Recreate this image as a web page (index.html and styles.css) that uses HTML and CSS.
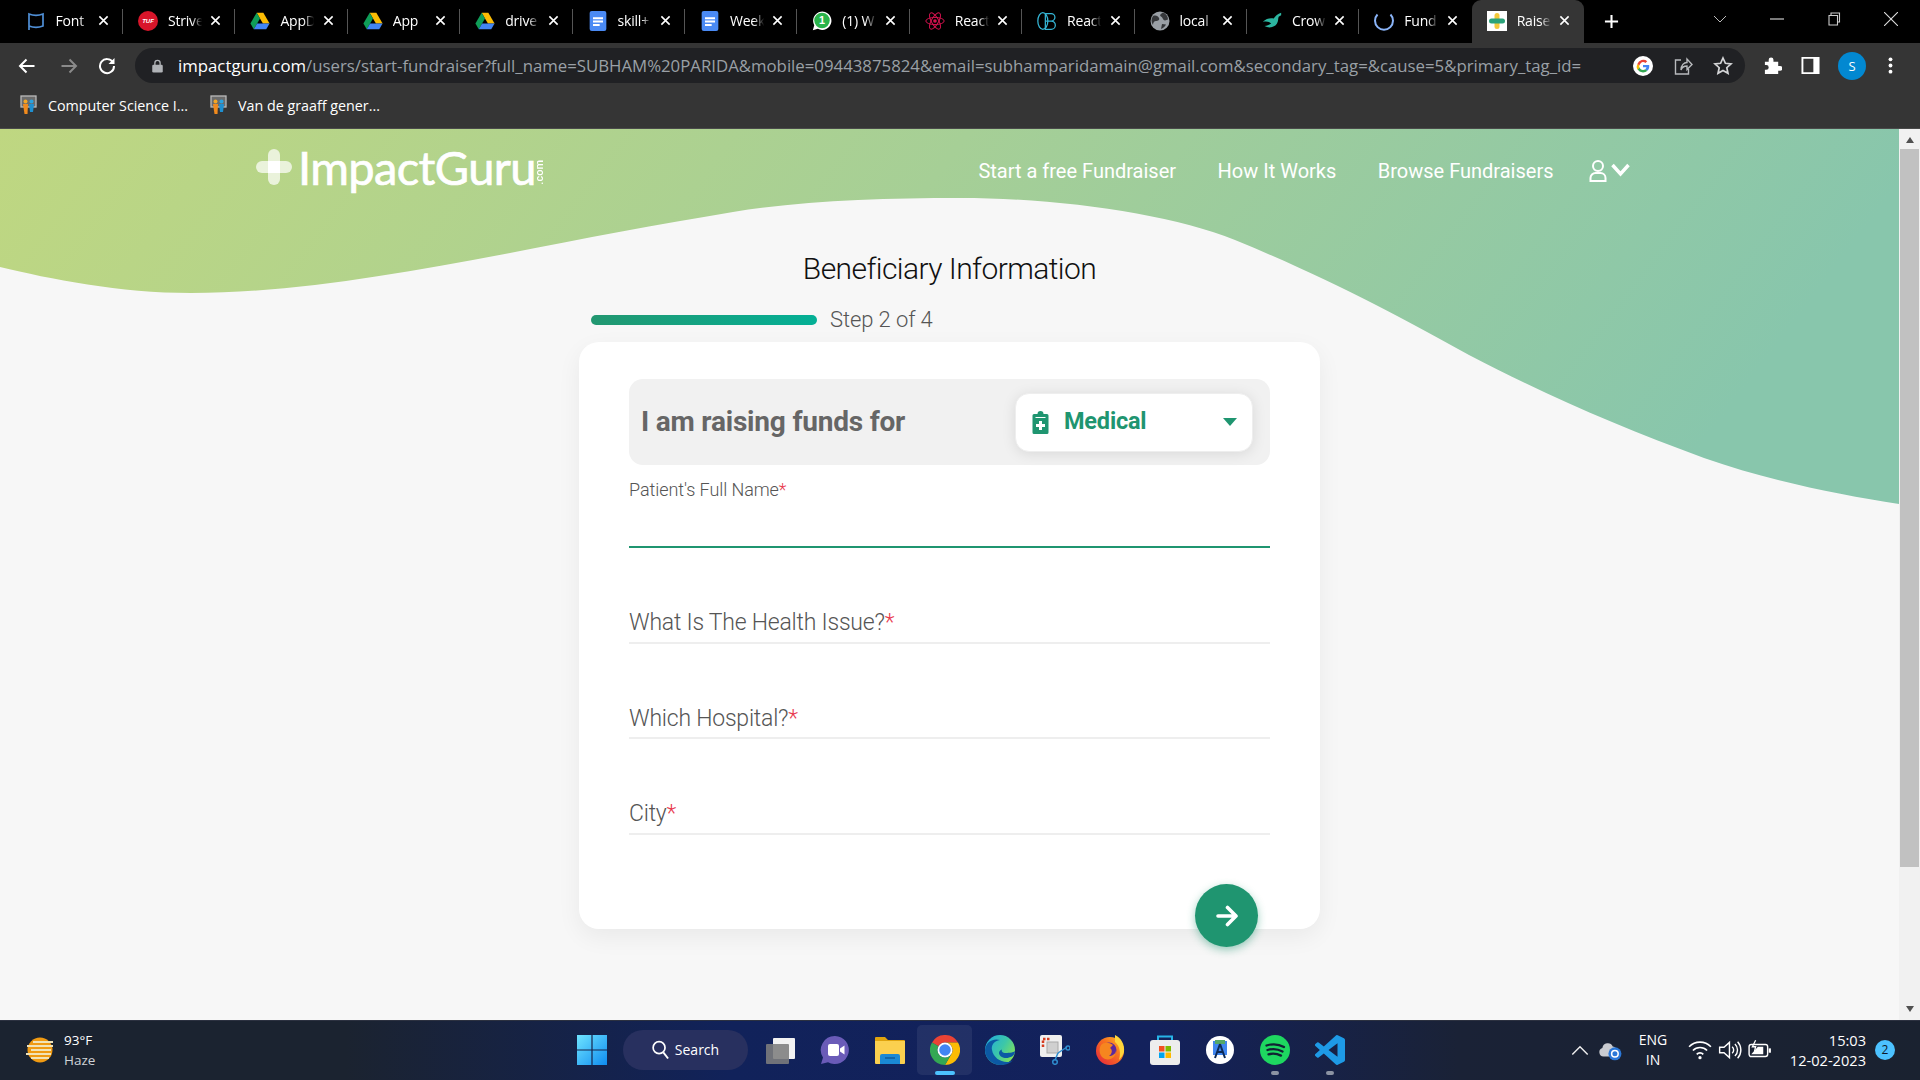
FILE: index.html
```html
<!DOCTYPE html>
<html lang="en">
<head>
<meta charset="utf-8">
<title>Raise Funds - ImpactGuru</title>
<link rel="stylesheet" href="styles.css">
</head>
<body>
<svg class="defs" aria-hidden="true">
  <symbol id="x" viewBox="0 0 12 12"><path d="M1.500 1.500l9 9M10.500 1.500l-9 9" stroke="#fff" stroke-width="1.700" fill="none"/></symbol>
  <symbol id="drive" viewBox="0 0 24 24"><path d="M8 2h8l7.500 13h-8z" fill="#fbbc04"/><path d="M8 2L.5 15l4 7L12 9z" fill="#0f9d58"/><path d="M4.500 22h15l4-7H8.500z" fill="#4285f4"/></symbol>
  <symbol id="docs" viewBox="0 0 20 24"><rect width="20" height="24" rx="2.500" fill="#4a8af4"/><path d="M4 7.500h12v2.400H4zM4 11.500h12v2.400H4zM4 15.500h8v2.400H4z" fill="#fff"/></symbol>
  <symbol id="bm" viewBox="0 0 17 20"><rect x="1" y="1" width="15" height="11" fill="#6b6b6b" stroke="#bbb" stroke-width="1.300"/><circle cx="5.500" cy="6.500" r="2" fill="#f5a623"/><circle cx="11.500" cy="6.500" r="2" fill="#29a3e0"/><path d="M3 9h5l-.5 10h-3z" fill="#f08a1d"/><path d="M9 9h5l-1 8h-3z" fill="#1f8fd0"/></symbol>
</svg>

<header class="tabstrip">
  <div class="tab"><svg class="fav" viewBox="0 0 20 20"><path d="M3 19V3c5 2 9 2 14 0v12c-5 2-9 2-14 0" fill="none" stroke="#4f8fd6" stroke-width="1.700"/></svg><span class="tab-name">Font</span><svg class="close"><use href="#x"/></svg></div>
  <div class="tab"><svg class="fav" viewBox="0 0 20 20"><circle cx="10" cy="10" r="10" fill="#d8152a"/><text x="10" y="12.300" class="tuf">TUF</text></svg><span class="tab-name">Strive</span><svg class="close"><use href="#x"/></svg></div>
  <div class="tab"><svg class="fav"><use href="#drive"/></svg><span class="tab-name">AppD</span><svg class="close"><use href="#x"/></svg></div>
  <div class="tab"><svg class="fav"><use href="#drive"/></svg><span class="tab-name">App</span><svg class="close"><use href="#x"/></svg></div>
  <div class="tab"><svg class="fav"><use href="#drive"/></svg><span class="tab-name">drive</span><svg class="close"><use href="#x"/></svg></div>
  <div class="tab"><svg class="fav"><use href="#docs"/></svg><span class="tab-name">skill+</span><svg class="close"><use href="#x"/></svg></div>
  <div class="tab"><svg class="fav"><use href="#docs"/></svg><span class="tab-name">Week</span><svg class="close"><use href="#x"/></svg></div>
  <div class="tab"><svg class="fav" viewBox="0 0 24 24"><path d="M1 23l1.700-6A11 11 0 1 1 7 21.300z" fill="#fff"/><circle cx="12" cy="11.500" r="9.300" fill="#29b34a"/><text x="12" y="16" class="wa">1</text></svg><span class="tab-name">(1) W</span><svg class="close"><use href="#x"/></svg></div>
  <div class="tab"><svg class="fav" viewBox="0 0 24 24"><g fill="none" stroke="#d3124e" stroke-width="1.200"><ellipse cx="12" cy="12" rx="11" ry="4.300"/><ellipse cx="12" cy="12" rx="11" ry="4.300" transform="rotate(60 12 12)"/><ellipse cx="12" cy="12" rx="11" ry="4.300" transform="rotate(120 12 12)"/></g><circle cx="12" cy="12" r="2.200" fill="#d3124e"/></svg><span class="tab-name">React</span><svg class="close"><use href="#x"/></svg></div>
  <div class="tab"><svg class="fav" viewBox="0 0 24 24"><g fill="none" stroke="#35b6d6" stroke-width="1.500"><ellipse cx="7" cy="12" rx="6" ry="10"/><path d="M10 3h7a4.500 4.500 0 0 1 0 9h-7M17 12a5 5 0 0 1 0 10h-7V3"/></g></svg><span class="tab-name">React</span><svg class="close"><use href="#x"/></svg></div>
  <div class="tab"><svg class="fav" viewBox="0 0 20 20"><circle cx="10" cy="10" r="9.500" fill="#9aa0a6"/><path d="M3 5c3-1 5 0 6 2s-1 3-3 3-3 2-3 4c-2-3-2-6 0-9zM13 1.500c3 1 5 4 5 7l-3 1c-2 0-2-3-4-4s0-3 2-4zM12 13l4 .500c-1 2-3 4-5 4.500z" fill="#35373a"/></svg><span class="tab-name">local</span><svg class="close"><use href="#x"/></svg></div>
  <div class="tab"><svg class="fav" viewBox="0 0 24 24"><path d="M23 2C19 3 16 6 14 9 10 8 5 9 1 13c5-1 8 0 10 2-3 2-5 3-8 3 5 3 12 2 15-3 2-3 1-6 2-8l3-2z" fill="#2cb5a0"/></svg><span class="tab-name">Crow</span><svg class="close"><use href="#x"/></svg></div>
  <div class="tab"><svg class="fav" viewBox="0 0 20 20"><path d="M3.500 3.500a9 9 0 1 0 13 0" fill="none" stroke="#8ab4f8" stroke-width="2"/></svg><span class="tab-name">Fund</span><svg class="close"><use href="#x"/></svg></div>
  <div class="tab tab-active"><svg class="fav" viewBox="0 0 20 20"><rect width="20" height="20" fill="#fff"/><rect x="7.500" y="2" width="5" height="16" rx="2.500" fill="#f3c93a"/><rect x="2" y="7.500" width="16" height="5" rx="2.500" fill="#2ba37a"/></svg><span class="tab-name">Raise</span><svg class="close"><use href="#x"/></svg></div>
  <svg class="newtab" viewBox="0 0 16 16"><path d="M8 1v14M1 8h14" stroke="#fff" stroke-width="2.200"/></svg>
  <div class="winctl">
    <svg class="win-i" viewBox="0 0 14 14"><path d="M1 4l6 6 6-6" fill="none" stroke="#bbb" stroke-width="1"/></svg>
    <svg class="win-i" viewBox="0 0 14 14"><path d="M0 7h14" stroke="#ccc" stroke-width="1.200"/></svg>
    <svg class="win-i" viewBox="0 0 14 14"><path d="M2 3.500h8.500v9.500H2zM4 3.500V1h8.500v9h-2" fill="none" stroke="#ccc" stroke-width="1.100"/></svg>
    <svg class="win-i" viewBox="0 0 14 14"><path d="M0 0l14 14M14 0L0 14" stroke="#ddd" stroke-width="1.100"/></svg>
  </div>
</header>

<div class="toolbar">
  <svg class="tb-i" viewBox="0 0 18 18"><path d="M16.500 9H2M8.500 2.500L2 9l6.500 6.500" fill="none" stroke="#fff" stroke-width="2"/></svg>
  <svg class="tb-i" viewBox="0 0 18 18"><path d="M1.500 9H16M9.500 2.500L16 9l-6.500 6.500" fill="none" stroke="#8a8a8a" stroke-width="2"/></svg>
  <svg class="tb-i" viewBox="0 0 18 18"><path d="M15 5.500A7 7 0 1 0 16 9" fill="none" stroke="#fff" stroke-width="2"/><path d="M16.500 1v6h-6z" fill="#fff"/></svg>
  <div class="omnibox">
    <svg class="lock" viewBox="0 0 12 16"><path d="M3 7V4.500a3 3 0 0 1 6 0V7" fill="none" stroke="#b0b3b7" stroke-width="1.500"/><rect y="6.500" width="12" height="9" rx="1.500" fill="#b0b3b7"/></svg>
    <div class="url"><span class="url-host">impactguru.com</span>/users/start-fundraiser?full_name=SUBHAM%20PARIDA&amp;mobile=09443875824&amp;email=subhamparidamain@gmail.com&amp;secondary_tag=&amp;cause=5&amp;primary_tag_id=</div>
    <svg class="omni-i" viewBox="0 0 24 24"><circle cx="12" cy="12" r="12" fill="#fff"/><path d="M19.500 12.200c0-.6 0-1-.1-1.500H12v2.900h4.200a3.600 3.600 0 0 1-1.500 2.300l2.400 1.900c1.500-1.300 2.400-3.300 2.400-5.600z" fill="#4285f4"/><path d="M12 19.700c2.100 0 3.800-.7 5.100-1.900l-2.400-1.900c-.7.500-1.600.8-2.700.8-2 0-3.700-1.400-4.300-3.200l-2.500 1.900a7.700 7.700 0 0 0 6.800 4.300z" fill="#34a853"/><path d="M7.700 14.500a4.600 4.600 0 0 1 0-3L5.200 9.600a7.700 7.700 0 0 0 0 6.800z" fill="#fbbc05"/><path d="M12 7.300c1.100 0 2.100.4 2.900 1.100l2.200-2.200A7.700 7.700 0 0 0 5.200 9.600l2.500 1.900c.6-1.800 2.300-4.200 4.300-4.200z" fill="#ea4335"/></svg>
    <svg class="omni-i" viewBox="0 0 20 20"><path d="M8 4H2.500v14h13v-5M8 14c0-5 3-7.500 6-7.500V3l5 5.500-5 5V10c-3 0-5 1-6 4z" fill="none" stroke="#b8babd" stroke-width="1.400"/></svg>
    <svg class="omni-i" viewBox="0 0 20 20"><path d="M10 2l2.400 5.300 5.600.6-4.200 3.800 1.200 5.600-5-2.900-5 2.900 1.200-5.600L2 7.900l5.600-.6z" fill="none" stroke="#d4d5d7" stroke-width="1.700"/></svg>
  </div>
  <svg class="ext-i" viewBox="0 0 20 20"><path d="M2 6h4V4a2.500 2.500 0 0 1 5 0v2h5v4.500h2a2.500 2.500 0 0 1 0 5h-2V19H2v-4.500h1.500a2.500 2.500 0 0 0 0-5H2z" fill="#fff"/></svg>
  <svg class="ext-i" viewBox="0 0 20 20"><path d="M1.500 2h17v16h-17z" fill="none" stroke="#fff" stroke-width="2"/><path d="M13 2h5.500v16H13z" fill="#fff"/></svg>
  <div class="avatar">S</div>
  <svg class="ext-i" viewBox="0 0 20 20"><circle cx="10" cy="3.500" r="2" fill="#fff"/><circle cx="10" cy="10" r="2" fill="#fff"/><circle cx="10" cy="16.500" r="2" fill="#fff"/></svg>
</div>

<nav class="bookmarks">
  <a class="bm"><svg class="bm-i"><use href="#bm"/></svg>Computer Science I...</a>
  <a class="bm"><svg class="bm-i"><use href="#bm"/></svg>Van de graaff gener...</a>
</nav>

<div class="page-row">
  <main class="viewport">
    <svg class="wave" viewBox="0 0 1899 376" preserveAspectRatio="none" aria-hidden="true">
      <defs><linearGradient id="wg" x1="0" y1="0" x2="1" y2="0.150"><stop offset="0" stop-color="#bfd781"/><stop offset="0.500" stop-color="#a6cf96"/><stop offset="1" stop-color="#88c6ac"/></linearGradient></defs>
      <path d="M0 0H1899V375C1840 366 1770 352 1704 329C1620 298 1550 268 1469 226C1400 188 1330 150 1235 111C1170 85 1060 69 960 69C880 69 800 72 733 83C660 95 580 110 510 124C400 145 290 164 191 164C120 164 50 150 0 138Z" fill="url(#wg)"/>
    </svg>
    <div class="site-nav">
      <a class="logo">
        <svg class="logo-plus" viewBox="0 0 36 36"><rect x="12" width="12" height="36" rx="6" fill="#fff" fill-opacity=".7"/><rect y="12" width="36" height="12" rx="6" fill="#fff" fill-opacity=".7"/><rect x="12" y="12" width="12" height="12" fill="#fff"/></svg>
        <span class="logo-word">ImpactGuru</span><span class="logo-com">.com</span>
      </a>
      <div class="nav-links">
        <a class="nav-link">Start a free Fundraiser</a>
        <a class="nav-link">How It Works</a>
        <a class="nav-link">Browse Fundraisers</a>
        <svg class="nav-user" viewBox="0 0 42 24"><circle cx="9" cy="7" r="5" fill="none" stroke="#fff" stroke-width="2"/><path d="M1.500 22v-3a5 5 0 0 1 5-5h5a5 5 0 0 1 5 5v3z" fill="none" stroke="#fff" stroke-width="2"/><path d="M23.500 6l8 9 8-9" fill="none" stroke="#fff" stroke-width="3.400"/></svg>
      </div>
    </div>
    <section class="wizard">
      <h1 class="title">Beneficiary Information</h1>
      <div class="step">
        <div class="progress"></div>
        <span class="step-text">Step 2 of 4</span>
      </div>
      <form class="card">
        <div class="cause">
          <span class="cause-label">I am raising funds for</span>
          <div class="select">
            <svg class="clip" viewBox="0 0 16 23"><path d="M1.500 3H5a3 3 0 0 1 6 0h3.500A1.500 1.500 0 0 1 16 4.500v17a1.500 1.500 0 0 1-1.500 1.500h-13A1.500 1.500 0 0 1 0 21.500v-17A1.500 1.500 0 0 1 1.500 3z" fill="#1f9570"/><path d="M6.500 10h3v3h3v3h-3v3h-3v-3h-3v-3h3z" fill="#fff"/><path d="M3 6.500h10" stroke="#fff" stroke-width="1"/></svg>
            <span class="select-text">Medical</span>
            <span class="caret"></span>
          </div>
        </div>
        <div class="field field-active">
          <span class="field-label">Patient's Full Name<i class="req">*</i></span>
        </div>
        <div class="field"><span class="placeholder">What Is The Health Issue?<i class="req">*</i></span></div>
        <div class="field"><span class="placeholder">Which Hospital?<i class="req">*</i></span></div>
        <div class="field"><span class="placeholder">City<i class="req">*</i></span></div>
        <div class="form-foot">
          <div class="next"><svg class="next-i" viewBox="0 0 22 22"><path d="M2 11h17M11.500 2.500L20 11l-8.500 8.500" fill="none" stroke="#fff" stroke-width="3.600" stroke-linecap="round" stroke-linejoin="round"/></svg></div>
        </div>
      </form>
    </section>
  </main>
  <aside class="scrollbar">
    <span class="sb-up"></span>
    <div class="sb-thumb"></div>
    <span class="sb-down"></span>
  </aside>
</div>

<footer class="taskbar">
  <div class="weather">
    <svg class="weather-i" viewBox="0 0 30 26"><circle cx="15" cy="13" r="12.500" fill="#f09a12"/><path d="M8 5h20M2 9h26M6 13h20M1 17h25M6 21h18" stroke="#f1e3b8" stroke-width="2"/></svg>
    <div class="weather-text"><span class="w-temp">93°F</span><span class="w-cond">Haze</span></div>
  </div>
  <div class="tb-app"><svg class="app-i" viewBox="0 0 30 30"><defs><linearGradient id="wn" x1="0" y1="0" x2="1" y2="1"><stop offset="0" stop-color="#6fe4ff"/><stop offset="1" stop-color="#0f8cf0"/></linearGradient></defs><path d="M0 0h14.400v14.400H0zM15.600 0H30v14.400H15.600zM0 15.600h14.400V30H0zM15.600 15.600H30V30H15.600z" fill="url(#wn)"/></svg></div>
  <div class="search"><svg class="search-i" viewBox="0 0 18 20"><circle cx="7.500" cy="7.500" r="6.300" fill="none" stroke="#fff" stroke-width="1.800"/><path d="M12 12.500l5 6.500" stroke="#fff" stroke-width="2"/></svg><span>Search</span></div>
  <div class="tb-app tb-first"><svg class="app-i" viewBox="0 0 30 30"><rect x="8" y="3" width="22" height="21" rx="1" fill="#f2f2f2"/><rect x="1" y="9" width="23" height="20" rx="1" fill="#7d7d7d" fill-opacity=".88"/></svg></div>
  <div class="tb-app"><svg class="app-i" viewBox="0 0 30 30"><path d="M15 1a14 14 0 1 1-7 26.200L1 29l2-6.500A14 14 0 0 1 15 1z" fill="#6a5bb8"/><rect x="8" y="9" width="11" height="12" rx="2" fill="#fff"/><path d="M20 13.500l4.500-3v9l-4.500-3z" fill="#fff"/></svg></div>
  <div class="tb-app"><svg class="app-i" viewBox="0 0 30 30"><path d="M0 3a1 1 0 0 1 1-1h9l3 3h16a1 1 0 0 1 1 1v5H0z" fill="#e0a40e"/><path d="M0 6h30v22a1 1 0 0 1-1 1H1a1 1 0 0 1-1-1z" fill="#fbd04f"/><path d="M5 29V21a2 2 0 0 1 2-2h16a2 2 0 0 1 2 2v8z" fill="#1a89d4"/><path d="M10 23h10" stroke="#0d5c9c" stroke-width="1.500"/></svg></div>
  <div class="tb-app tb-active"><svg class="app-i" viewBox="0 0 24 24"><path d="M1.600 6A12 12 0 0 1 22.400 6H12A6 6 0 0 0 6.800 9z" fill="#ea4335"/><path d="M22.400 6A12 12 0 0 1 12 24l5.200-9A6 6 0 0 0 12 6z" fill="#fbbc04"/><path d="M12 24A12 12 0 0 1 1.600 6l5.200 3a6 6 0 0 0 10.400 6z" fill="#34a853"/><circle cx="12" cy="12" r="6" fill="#fff"/><circle cx="12" cy="12" r="4.600" fill="#4285f4"/></svg><span class="run run-on"></span></div>
  <div class="tb-app"><svg class="app-i" viewBox="0 0 30 30"><defs><linearGradient id="ed" x1="0" y1="0" x2="1" y2=".6"><stop offset="0" stop-color="#1fa9e4"/><stop offset=".6" stop-color="#3cc7a8"/><stop offset="1" stop-color="#7ee05e"/></linearGradient></defs><circle cx="15" cy="15" r="15" fill="url(#ed)"/><path d="M0 15C1 6 9 3 15 5c-6 1-9 5-8 10 1 7 8 12 15 12 2 0 4-.5 6-2-3 4-8 5-13 5C7 30 0 23 0 15z" fill="#0c59a4"/><path d="M30 16c0 5-5 7-9 7-3 0-7-2-7-5 0-2 1.500-3 3-3.500-1 2 1 3.500 3.500 3.500 4 0 9.500-1 9.500-2z" fill="#0c59a4"/></svg></div>
  <div class="tb-app"><svg class="app-i" viewBox="0 0 30 30"><rect width="22" height="22" rx="2" fill="#efefef"/><path d="M3 12V4h8" fill="none" stroke="#d63c20" stroke-width="2.500" stroke-dasharray="2.500 1.500"/><rect x="7" y="7" width="11" height="11" fill="#d0d0d0" stroke="#aaa"/><path d="M18 18l9-6M18 18l-3 7" stroke="#2f8ed0" stroke-width="1.500"/><circle cx="28" cy="13" r="2" fill="none" stroke="#2f8ed0" stroke-width="1.500"/><circle cx="15" cy="27" r="2.300" fill="none" stroke="#2f8ed0" stroke-width="1.500"/></svg></div>
  <div class="tb-app"><svg class="app-i" viewBox="0 0 30 30"><defs><linearGradient id="ff" x1="0" y1="1" x2="1" y2="0"><stop offset="0" stop-color="#e5213f"/><stop offset=".6" stop-color="#f8751e"/><stop offset="1" stop-color="#ffc62f"/></linearGradient></defs><circle cx="15" cy="16" r="14" fill="url(#ff)"/><path d="M20 0c6 3 10 9 9 17-1 3-3 6-5 8 2-7 1-14-4-18z" fill="#ffd53a"/><circle cx="14" cy="15" r="7.500" fill="#5b2a9d"/><path d="M6 10c3-3 8-3 12 0l-3 3c3 2 2 6-1 8 3 0 7-2 7-6 1 6-5 11-11 9-5-2-7-9-4-14z" fill="#f6861f"/></svg></div>
  <div class="tb-app"><svg class="app-i" viewBox="0 0 30 30"><path d="M8 6V1.500h14V6" fill="none" stroke="#27b3e8" stroke-width="2"/><rect y="5" width="30" height="25" rx="3" fill="#ededed"/><path d="M9 11h5.500v5.500H9z" fill="#f25022"/><path d="M15.500 11H21v5.500h-5.500z" fill="#7fba00"/><path d="M9 17.500h5.500V23H9z" fill="#00a4ef"/><path d="M15.500 17.500H21V23h-5.500z" fill="#ffb900"/></svg></div>
  <div class="tb-app"><svg class="app-i" viewBox="0 0 30 30"><circle cx="15" cy="15" r="14" fill="#fff"/><path d="M8 6h14v14H8z" fill="#4086f0"/><path d="M10 5h10v4H10z" fill="#54a868"/><path d="M15 9l-5 14M15 9l5 14M12 17h6" stroke="#0d2a55" stroke-width="2" fill="none"/></svg></div>
  <div class="tb-app"><svg class="app-i" viewBox="0 0 30 30"><circle cx="15" cy="15" r="15" fill="#1ed760"/><path d="M6.500 10.500c6-1.800 12.500-1.300 17.500 1.500M7.500 15c5-1.400 10.500-1 15 1.500M8.500 19.300c4-1 8.500-.7 12.500 1.300" fill="none" stroke="#123" stroke-width="2.300" stroke-linecap="round"/></svg><span class="run"></span></div>
  <div class="tb-app"><svg class="app-i" viewBox="0 0 24 24"><path d="M23.150 2.587L18.210.21a1.494 1.494 0 0 0-1.705.29l-9.460 8.630-4.120-3.128a.999.999 0 0 0-1.276.057L.327 7.261A1 1 0 0 0 .326 8.740L3.899 12 .326 15.260a1 1 0 0 0 .001 1.479L1.650 17.940a.999.999 0 0 0 1.276.057l4.120-3.128 9.460 8.630a1.492 1.492 0 0 0 1.704.29l4.942-2.377A1.500 1.500 0 0 0 24 20.060V3.939a1.500 1.500 0 0 0-.85-1.352zm-5.146 14.861L10.826 12l7.178-5.448v10.896z" fill="#1e9ae6"/></svg><span class="run"></span></div>

  <div class="tray">
    <svg class="tray-i" viewBox="0 0 20 20"><path d="M3 14l7-7 7 7" fill="none" stroke="#eee" stroke-width="1.300"/></svg>
    <svg class="tray-i" viewBox="0 0 22 20"><path d="M5 16a4 4 0 0 1-1-7.800 5 5 0 0 1 9.500-1.500A4 4 0 0 1 17 12v4z" fill="#c9cbd0"/><circle cx="15.500" cy="13.500" r="6" fill="#2b78d8"/><circle cx="15.500" cy="13.500" r="3" fill="none" stroke="#fff" stroke-width="1.400"/></svg>
    <div class="lang"><span>ENG</span><span>IN</span></div>
    <svg class="tray-i" viewBox="0 0 22 20"><path d="M1 7a14 14 0 0 1 20 0M4.500 10.500a9 9 0 0 1 13 0M8 14a4 4 0 0 1 6 0" fill="none" stroke="#fff" stroke-width="1.500"/><circle cx="11" cy="17" r="1.500" fill="#fff"/></svg>
    <svg class="tray-i" viewBox="0 0 22 20"><path d="M1.500 7.500h4l5-4.500v14l-5-4.500h-4z" fill="none" stroke="#fff" stroke-width="1.300"/><path d="M13 7a4 4 0 0 1 0 6M15.500 4.500a7.500 7.500 0 0 1 0 11M18 2.500a11 11 0 0 1 0 15" fill="none" stroke="#fff" stroke-width="1.300"/></svg>
    <svg class="tray-i" viewBox="0 0 22 20"><rect x="1" y="5" width="17" height="11" rx="2" fill="none" stroke="#fff" stroke-width="1.300"/><path d="M19 8.500h2v4h-2z" fill="#fff"/><path d="M3 14l6-7h5v7z" fill="#fff"/><path d="M7 1L4 7h3l-1 4" fill="none" stroke="#fff" stroke-width="1.200"/></svg>
    <div class="clock"><span>15:03</span><span>12-02-2023</span></div>
    <div class="badge">2</div>
  </div>
</footer>
</body>
</html>
```
FILE: styles.css
```css
* { box-sizing: border-box; }
html, body { margin: 0; padding: 0; }
body {
  width: 1920px;
  height: 1080px;
  overflow: hidden;
  display: flex;
  flex-direction: column;
  font-family: "Roboto", "Liberation Sans", sans-serif;
  background: #000;
}
.defs { position: absolute; width: 0; height: 0; }

/* tab strip */
.tabstrip {
  height: 43px;
  flex: none;
  display: flex;
  align-items: center;
  padding-left: 10.6px;
  background: #000;
  font-family: "Open Sans", "Liberation Sans", sans-serif;
}
.tab {
  width: 112.4px;
  height: 43px;
  flex: none;
  display: flex;
  align-items: center;
  padding: 0 14px 2px 15px;
  position: relative;
}
.tab::after {
  content: "";
  position: absolute;
  right: 0;
  top: 9px;
  height: 25px;
  width: 1px;
  background: #555;
}
.tab:nth-child(13)::after, .tab-active::after { display: none; }
.tab-active { background: #353535; border-radius: 9px 9px 0 0; }
.fav { width: 20px; height: 20px; flex: none; }
.tab-name {
  margin-left: 10px;
  width: 38px;
  white-space: nowrap;
  font-size: 14px;
  letter-spacing: -.2px;
  color: #fff;
  -webkit-mask-image: linear-gradient(90deg, #000 62%, transparent 90%);
  mask-image: linear-gradient(90deg, #000 62%, transparent 90%);
}
.close { width: 11px; height: 11px; margin-left: auto; flex: none; }
.tuf { font: italic 700 6px "Liberation Sans", sans-serif; fill: #fff; text-anchor: middle; }
.wa { font: 700 13px "Liberation Sans", sans-serif; fill: #fff; text-anchor: middle; }
.newtab { width: 15px; height: 15px; margin-left: 20px; }
.winctl { margin-left: auto; display: flex; align-items: center; gap: 43px; padding-right: 22px; }
.win-i { width: 14px; height: 14px; flex: none; margin-top: -6px; }

/* toolbar */
.toolbar {
  height: 45px;
  flex: none;
  display: flex;
  align-items: center;
  padding: 0 19px 0 18px;
  background: #353535;
  font-family: "Open Sans", "Liberation Sans", sans-serif;
}
.tb-i { width: 18px; height: 18px; flex: none; margin-right: 24px; }
.tb-i:nth-child(2) { margin-right: 20px; }
.tb-i:nth-child(3) { margin-right: 19px; }
.omnibox {
  width: 1610px;
  height: 35px;
  flex: none;
  display: flex;
  align-items: center;
  padding: 0 12px 0 17px;
  background: #202124;
  border-radius: 18px;
}
.lock { width: 11px; height: 14px; flex: none; }
.url {
  flex: 1;
  margin-left: 15px;
  white-space: nowrap;
  overflow: hidden;
  font-size: 16.8px;
  color: #9aa0a6;
}
.url-host { color: #fff; }
.omni-i { width: 20px; height: 20px; flex: none; margin-left: 20px; }
.ext-i { width: 19px; height: 19px; flex: none; margin-left: 19px; }
.omnibox + .ext-i { margin-left: 18px; }
.avatar {
  width: 28px;
  height: 28px;
  flex: none;
  margin-left: 18px;
  border-radius: 50%;
  background: #0288d1;
  color: #fff;
  font-size: 13px;
  display: flex;
  align-items: center;
  justify-content: center;
}
.avatar + .ext-i { margin-left: 15px; }

/* bookmarks */
.bookmarks {
  height: 41px;
  flex: none;
  display: flex;
  align-items: center;
  gap: 22px;
  padding: 0 0 6px 20px;
  background: #353535;
  border-bottom: 1px solid #4a4a4a;
  font-family: "Open Sans", "Liberation Sans", sans-serif;
}
.bm { display: flex; align-items: center; font-size: 14.3px; color: #fff; white-space: nowrap; }
.bm-i { width: 17px; height: 20px; margin-right: 11px; flex: none; }

/* page */
.page-row { height: 891px; flex: none; display: flex; }
.viewport {
  width: 1899px;
  flex: none;
  position: relative;
  background: #f7f7f7;
  overflow: hidden;
}
.wave { position: absolute; left: 0; top: 0; width: 1899px; height: 376px; }
.site-nav {
  position: relative;
  height: 84px;
  display: flex;
  align-items: center;
  padding: 0 268.5px 0 256px;
}
.logo { display: flex; align-items: center; color: #fff; margin-top: -8px; }
.logo-plus { width: 36px; height: 36px; flex: none; }
.logo-word {
  margin-left: 6px;
  font-family: "Lato", sans-serif;
  font-size: 47px;
  font-weight: 400;
  line-height: 50px;
  letter-spacing: -.6px;
  -webkit-text-stroke: .7px #fff;
}
.logo-com {
  writing-mode: vertical-rl;
  transform: rotate(180deg);
  font-family: "Roboto", sans-serif;
  font-size: 11px;
  font-weight: 500;
  margin: 10px 0 0 -3px;
}
.nav-links { margin-left: auto; display: flex; align-items: center; gap: 41.5px; }
.nav-link { font-size: 20px; color: #fff; white-space: nowrap; }
.nav-user { width: 42px; height: 24px; flex: none; margin-left: -6.5px; }

.wizard { position: relative; width: 741px; margin: 0 auto; }
.title {
  margin: 38px 0 0;
  font-size: 30px;
  line-height: 36px;
  font-weight: 300;
  letter-spacing: -.58px;
  color: #111;
  text-align: center;
}
.step { display: flex; align-items: center; height: 30px; margin-top: 17px; padding-left: 12px; }
.progress {
  width: 226px;
  height: 10px;
  margin-top: 2px;
  border-radius: 5px;
  background: linear-gradient(90deg, #229770, #04b096);
}
.step-text { margin-left: 13px; font-size: 22px; font-weight: 300; letter-spacing: -.1px; color: #555; }
.card {
  margin-top: 8px;
  padding: 37px 50px 0;
  height: 587px;
  background: #fff;
  border-radius: 20px;
  box-shadow: 0 8px 24px rgba(0, 0, 0, .06);
}
.cause {
  height: 86px;
  display: flex;
  align-items: center;
  justify-content: space-between;
  padding: 0 17px 0 12px;
  background: #f1f1f1;
  border-radius: 14px;
}
.cause-label { font-size: 28px; font-weight: 700; letter-spacing: -.2px; color: #666; padding-bottom: 2px; }
.select {
  width: 238px;
  height: 59px;
  display: flex;
  align-items: center;
  padding: 0 15px 0 16px;
  background: #fff;
  border: 1px solid #eee;
  border-radius: 14px;
  box-shadow: 0 2px 14px rgba(0, 0, 0, .1);
}
.clip { width: 17px; height: 23px; flex: none; }
.select-text { margin-left: 15px; font-size: 23.5px; font-weight: 700; letter-spacing: -.2px; color: #1f9570; padding-bottom: 2px; }
.caret {
  margin-left: auto;
  width: 0;
  height: 0;
  border-left: 7.5px solid transparent;
  border-right: 7.5px solid transparent;
  border-top: 8px solid #1f9570;
}
.field {
  height: 95.5px;
  display: flex;
  align-items: flex-end;
  padding-bottom: 3.5px;
  border-bottom: 2px solid #eee;
}
.field-active {
  height: 83px;
  align-items: flex-start;
  padding: 14px 0 0;
  border-bottom-color: #1f9570;
}
.field-label { font-size: 18px; font-weight: 300; letter-spacing: -.08px; color: #555; }
.placeholder { font-size: 23px; font-weight: 300; line-height: 30px; letter-spacing: -.22px; color: #555; }
.req { font-style: normal; color: #e8394d; }
.form-foot { display: flex; justify-content: flex-end; padding: 49.5px 12px 0 0; }
.next {
  width: 63px;
  height: 63px;
  border-radius: 50%;
  display: flex;
  align-items: center;
  justify-content: center;
  background: #1f9570;
  box-shadow: 0 3px 8px rgba(31, 149, 112, .45);
}
.next-i { width: 22px; height: 22px; }

/* scrollbar */
.scrollbar {
  width: 21px;
  flex: none;
  display: flex;
  flex-direction: column;
  align-items: center;
  background: #f1f1f1;
}
.sb-up, .sb-down {
  width: 0;
  height: 0;
  flex: none;
  border-left: 4px solid transparent;
  border-right: 4px solid transparent;
}
.sb-up { margin-top: 8px; border-bottom: 6px solid #505050; }
.sb-down { margin-top: auto; margin-bottom: 8px; border-top: 6px solid #505050; }
.sb-thumb { width: 19px; height: 718px; margin-top: 6px; background: #c1c1c1; }

/* taskbar */
.taskbar {
  height: 60px;
  flex: none;
  display: flex;
  align-items: center;
  padding-bottom: 2px;
  background: linear-gradient(90deg, #1b2330 0, #1b2330 18%, #11225a 38%, #13215c 60%, #1a2236 76%, #1a2230 100%);
  border-top: 1px solid #2c3140;
  font-family: "Open Sans", "Liberation Sans", sans-serif;
  color: #fff;
}
.weather { width: 564px; flex: none; display: flex; align-items: center; padding-left: 25px; }
.weather-i { width: 30px; height: 26px; flex: none; }
.weather-text { display: flex; flex-direction: column; margin-left: 9px; font-size: 13.5px; line-height: 20px; }
.w-cond { color: #cfd2d6; }
.tb-app {
  width: 55px;
  height: 50px;
  flex: none;
  position: relative;
  display: flex;
  align-items: center;
  justify-content: center;
}
.tb-first { margin-left: 4px; }
.tb-active { background: rgba(255, 255, 255, .07); border-radius: 5px; }
.app-i { width: 30px; height: 30px; }
.run {
  position: absolute;
  left: 50%;
  bottom: 0;
  width: 8px;
  height: 4px;
  margin-left: -4px;
  border-radius: 2px;
  background: #8c93a3;
}
.run-on { width: 20px; margin-left: -10px; background: #4cc2ff; }
.search {
  width: 125px;
  height: 40px;
  flex: none;
  margin-left: 4px;
  display: flex;
  align-items: center;
  justify-content: center;
  gap: 6px;
  border-radius: 20px;
  background: #28305f;
  font-size: 14px;
}
.search-i { width: 17px; height: 20px; flex: none; }
.tray { margin-left: auto; display: flex; align-items: center; padding-right: 25px; }
.tray-i { width: 24px; height: 22px; margin: 0 3px; flex: none; }
.lang {
  width: 46px;
  margin: 0 9px 0 5px;
  display: flex;
  flex-direction: column;
  align-items: center;
  font-size: 14px;
  line-height: 20px;
}
.clock {
  width: 91px;
  display: flex;
  flex-direction: column;
  align-items: flex-end;
  font-size: 14.6px;
  line-height: 20px;
}
.badge {
  width: 20px;
  height: 20px;
  margin-left: 9px;
  border-radius: 50%;
  background: #4cc2ff;
  color: #0d1a2b;
  font-size: 12px;
  display: flex;
  align-items: center;
  justify-content: center;
}
```
